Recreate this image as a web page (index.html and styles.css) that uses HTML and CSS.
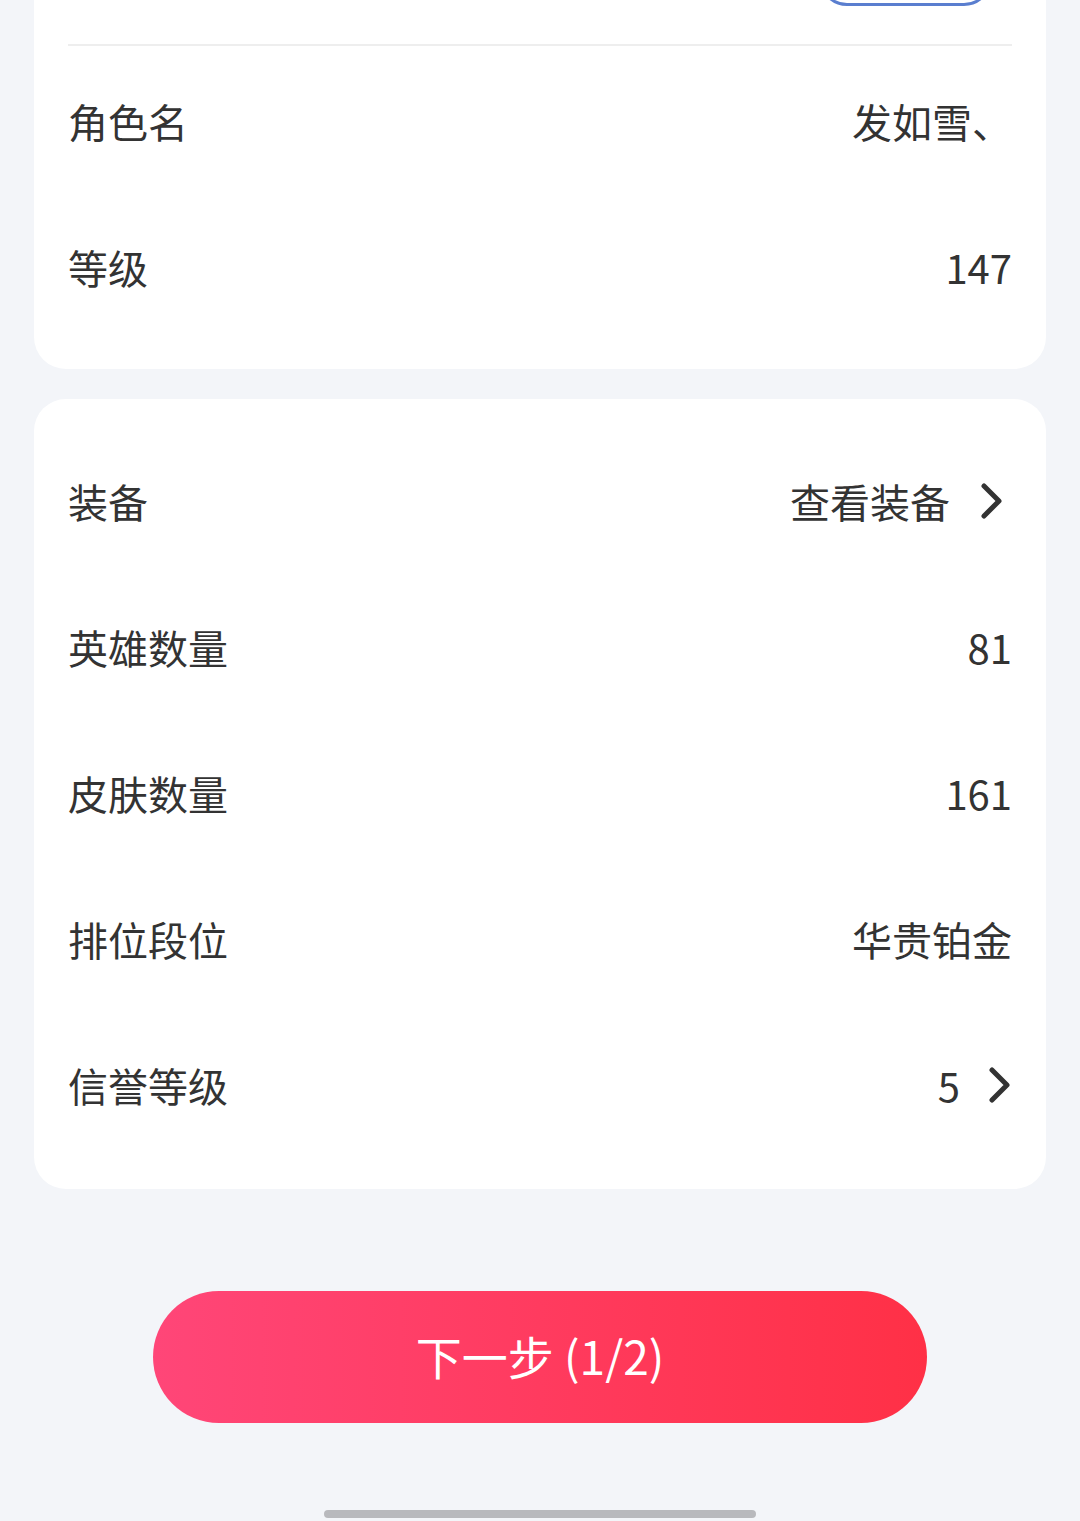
FILE: index.html
```html
<!DOCTYPE html>
<html lang="zh-CN">
<head>
    <meta charset="UTF-8">
    <meta name="viewport" content="width=device-width, initial-scale=1.0">
    <title>账号信息</title>
    <link rel="stylesheet" href="styles.css">
</head>
<body>

    <div class="page">
        <div class="card card-top">
            <div class="card-header">
                <button class="pill-btn"></button>
            </div>
            <div class="rows">
                <div class="row">
                    <span class="label">角色名</span>
                    <span class="value">发如雪、</span>
                </div>
                <div class="row">
                    <span class="label">等级</span>
                    <span class="value">147</span>
                </div>
            </div>
        </div>

        <div class="card">
            <div class="row">
                <span class="label">装备</span>
                <span class="value link">查看装备
                    <svg class="chevron" viewBox="0 0 24 36" width="24" height="36"><path d="M4 3 L19 18 L4 33" /></svg>
                </span>
            </div>
            <div class="row">
                <span class="label">英雄数量</span>
                <span class="value">81</span>
            </div>
            <div class="row">
                <span class="label">皮肤数量</span>
                <span class="value">161</span>
            </div>
            <div class="row">
                <span class="label">排位段位</span>
                <span class="value">华贵铂金</span>
            </div>
            <div class="row">
                <span class="label">信誉等级</span>
                <span class="value link small-gap">5
                    <svg class="chevron" viewBox="0 0 24 36" width="24" height="36"><path d="M4 3 L19 18 L4 33" /></svg>
                </span>
            </div>
        </div>

        <div class="footer">
            <button class="next-btn">下一步 (1/2)</button>
        </div>

        <div class="home-bar"></div>
    </div>

</body>
</html>
```

FILE: styles.css
```css
html, body {
    margin: 0;
    padding: 0;
}

body {
    font-family: "Noto Sans CJK SC", "Noto Sans", sans-serif;
    background-color: #f3f5f9;
    color: #333;
    width: 1080px;
    height: 1521px;
    overflow: hidden;
}

.page {
    padding: 0 34px;
}

.card {
    background-color: #fff;
    border-radius: 32px;
    padding: 30px 34px 30px;
    margin-bottom: 30px;
}

.card-top {
    margin-top: -50px;
    padding-top: 0;
    padding-bottom: 28px;
}

.card-header {
    height: 94px;
    display: flex;
    justify-content: flex-end;
    align-items: flex-start;
    border-bottom: 2px solid #eeeeee;
}

.pill-btn {
    width: 173px;
    height: 56px;
    margin-right: 20px;
    border: 3px solid #5a7ecf;
    border-radius: 30px;
    background: #fff;
    padding: 0;
}

.rows {
    padding-top: 3px;
}

.row {
    height: 146px;
    display: flex;
    align-items: center;
    justify-content: space-between;
    font-size: 40px;
    line-height: 1.3;
    padding-bottom: 3px;
    box-sizing: border-box;
}

.label {
    color: #333;
}

.value {
    color: #333;
    display: flex;
    align-items: center;
}

.chevron {
    margin-left: 30px;
    margin-right: 8px;
    fill: none;
    stroke: #333;
    stroke-width: 5;
    stroke-linecap: round;
    stroke-linejoin: round;
}

.small-gap .chevron {
    margin-left: 28px;
    margin-right: 0;
}

.footer {
    display: flex;
    justify-content: center;
    padding-top: 72px;
}

.next-btn {
    width: 774px;
    height: 132px;
    border: none;
    border-radius: 66px;
    background: linear-gradient(90deg, #ff4678, #ff3046);
    color: #fff;
    font-family: "Noto Sans CJK SC", "Noto Sans", sans-serif;
    font-size: 46px;
    line-height: 1;
    padding: 0 0 4px;
    cursor: pointer;
}

.home-bar {
    width: 432px;
    height: 8px;
    border-radius: 4px;
    background-color: #b8b9bd;
    margin: 87px auto 0;
}
```
